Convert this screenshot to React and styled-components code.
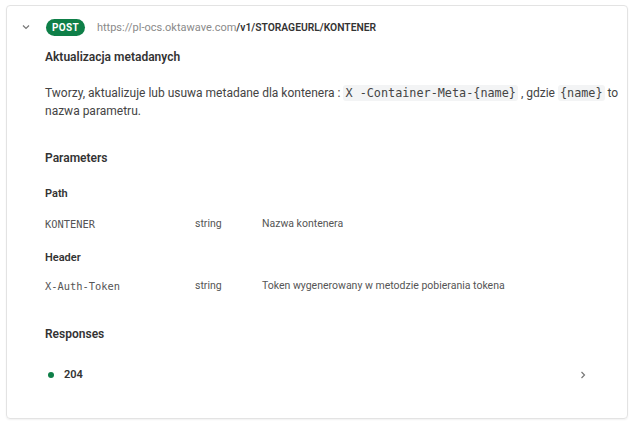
import React from "react";
import styled, { createGlobalStyle } from "styled-components";

const GlobalStyle = createGlobalStyle`
  body {
    margin: 0;
    background: #ffffff;
    font-family: Roboto, "Liberation Sans", sans-serif;
    color: #333;
  }
`;

const Page = styled.div`
  padding: 5px 7px 7px 6px;
`;

const Card = styled.div`
  border: 1px solid #e3e3e3;
  border-radius: 4px;
  box-shadow: 0 1px 2px rgba(0, 0, 0, 0.06);
  padding: 12px 0 24px 0;
  height: 414px;
  box-sizing: border-box;
`;

const Header = styled.div`
  display: flex;
  align-items: center;
  height: 18px;
  padding-left: 13px;
`;

const Toggle = styled.span`
  display: flex;
  width: 12px;
  justify-content: center;
  margin-right: 14px;
  color: #888;
`;

const Badge = styled.span`
  background: #0e7f48;
  color: #fff;
  font-size: 10px;
  font-weight: 700;
  letter-spacing: 0.3px;
  border-radius: 9px;
  padding: 2px 6px;
  line-height: 13px;
  margin-right: 12px;
`;

const Url = styled.span`
  font-size: 11px;
  color: #8a8a8a;
  b {
    color: #333;
    font-weight: 600;
    font-size: 10.3px;
  }
`;

const Body = styled.div`
  padding-left: 38px;
  padding-right: 2px;
`;

const Title = styled.div`
  font-size: 12px;
  font-weight: 600;
  color: #333;
  margin-top: 14px;
`;

const Desc = styled.p`
  font-size: 12px;
  color: #444;
  line-height: 18px;
  margin: 20px 0 0 0;
`;

const Code = styled.code`
  font-family: "DejaVu Sans Mono", "Liberation Mono", monospace;
  font-size: 11.8px;
  background: #f3f4f5;
  border-radius: 3px;
  padding: 1px 2px;
  color: #444;
`;

const Section = styled.div`
  font-size: 12px;
  font-weight: 600;
  color: #333;
  margin-top: ${(p) => p.top}px;
`;

const Group = styled.div`
  font-size: 11px;
  font-weight: 600;
  color: #333;
  margin-top: ${(p) => p.top}px;
`;

const ParamRow = styled.div`
  display: grid;
  grid-template-columns: 150px 67px 1fr;
  align-items: center;
  margin-top: ${(p) => p.top}px;
  font-size: 10.5px;
  color: #555;
`;

const ParamName = styled.span`
  font-family: "DejaVu Sans Mono", "Liberation Mono", monospace;
  font-size: 10.4px;
  color: #555;
`;

const ResponseRow = styled.div`
  display: flex;
  align-items: center;
  margin-top: 27px;
  padding-right: 37px;
`;

const Dot = styled.span`
  width: 6px;
  height: 6px;
  border-radius: 50%;
  background: #0e7f48;
  margin: 0 10px 0 3px;
`;

const Code204 = styled.span`
  font-size: 11px;
  font-weight: 600;
  color: #333;
  flex: 1;
`;

const Chevron = ({ dir }) => (
  <svg width="10" height="10" viewBox="0 0 10 10" fill="none" stroke="#777" strokeWidth="1.2">
    {dir === "down" ? <path d="M2 3.5 L5 6.5 L8 3.5" /> : <path d="M3.5 2 L6.5 5 L3.5 8" />}
  </svg>
);

export default function App() {
  return (
    <Page>
      <GlobalStyle />
      <Card>
        <Header>
          <Toggle>
            <Chevron dir="down" />
          </Toggle>
          <Badge>POST</Badge>
          <Url>
            https://pl-ocs.oktawave.com<b>/v1/STORAGEURL/KONTENER</b>
          </Url>
        </Header>
        <Body>
          <Title>Aktualizacja metadanych</Title>
          <Desc>
            Tworzy, aktualizuje lub usuwa metadane dla kontenera : <Code>X -Container-Meta-{"{name}"}</Code> , gdzie{" "}
            <Code>{"{name}"}</Code> to nazwa parametru.
          </Desc>
          <Section top={31}>Parameters</Section>
          <Group top={22}>Path</Group>
          <ParamRow top={17}>
            <ParamName>KONTENER</ParamName>
            <span>string</span>
            <span>Nazwa kontenera</span>
          </ParamRow>
          <Group top={21}>Header</Group>
          <ParamRow top={15}>
            <ParamName>X-Auth-Token</ParamName>
            <span>string</span>
            <span>Token wygenerowany w metodzie pobierania tokena</span>
          </ParamRow>
          <Section top={35}>Responses</Section>
          <ResponseRow>
            <Dot />
            <Code204>204</Code204>
            <Chevron dir="right" />
          </ResponseRow>
        </Body>
      </Card>
    </Page>
  );
}
